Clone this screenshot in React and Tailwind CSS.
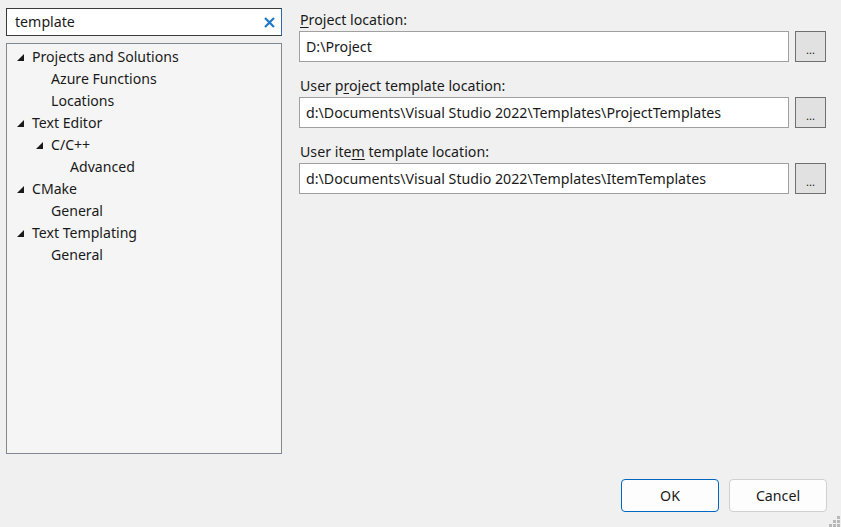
import { useState } from 'react';

const FONT = { fontFamily: '"Noto Sans", "Open Sans", sans-serif' };

const TREE = [
  { label: 'Projects and Solutions', depth: 0, open: true },
  { label: 'Azure Functions', depth: 1 },
  { label: 'Locations', depth: 1 },
  { label: 'Text Editor', depth: 0, open: true },
  { label: 'C/C++', depth: 1, open: true },
  { label: 'Advanced', depth: 2 },
  { label: 'CMake', depth: 0, open: true },
  { label: 'General', depth: 1 },
  { label: 'Text Templating', depth: 0, open: true },
  { label: 'General', depth: 1 },
];

const INDENT = ['pl-[25px]', 'pl-[44px]', 'pl-[63px]'];
const CARET = ['left-[10px]', 'left-[29px]', 'left-[48px]'];

function Caret() {
  return (
    <svg width="7" height="7" viewBox="0 0 7 7" className="block">
      <polygon points="7,0 7,7 0,7" fill="#1a1a1a" />
    </svg>
  );
}

function TreeRow({ item }) {
  return (
    <div className={`relative h-[22px] flex items-center ${INDENT[item.depth]}`}>
      {item.open && (
        <span className={`absolute top-[8px] ${CARET[item.depth]}`}>
          <Caret />
        </span>
      )}
      <span className="text-[14.1px] text-[#1a1a1a] leading-none">{item.label}</span>
    </div>
  );
}

function PathField({ label, value }) {
  return (
    <div className="flex flex-col">
      <div className="h-[23px] pt-[2px] flex items-center text-[14.2px] text-[#1a1a1a] pl-[1px]">
        <span>{label}</span>
      </div>
      <div className="flex gap-[6px] mt-[1px]">
        <div className="h-[31px] flex-1 bg-white border border-[#a0a0a0] flex items-center px-[6px] text-[14.2px] text-[#1a1a1a] whitespace-nowrap overflow-hidden">
          {value}
        </div>
        <button className="w-[31px] h-[31px] bg-[#e1e1e1] border border-[#707070] flex items-end justify-center pb-[6px] text-[11px] text-[#1a1a1a] leading-none">
          ...
        </button>
      </div>
    </div>
  );
}

function Grip() {
  const dots = [
    [8, 0], [8, 4], [4, 4], [8, 8], [4, 8], [0, 8],
  ];
  return (
    <svg width="11" height="11" viewBox="0 0 11 11" className="absolute right-[1px] bottom-0">
      {dots.map(([x, y], i) => (
        <rect key={i} x={x} y={y} width="3" height="3" fill="#b9b9b9" />
      ))}
    </svg>
  );
}

export default function App() {
  const [query, setQuery] = useState('template');

  return (
    <div className="relative w-[841px] h-[527px] bg-[#f0f0f0] overflow-hidden" style={FONT}>
      <div className="flex h-full">
        {/* Left: search + tree */}
        <div className="w-[276px] ml-[6px] mt-[8px] flex flex-col">
          <div className="h-[28px] bg-white border border-[#3a3a3a] border-r-[#2b6cb0] flex items-center pl-[8px] pr-[6px]">
            <input
              value={query}
              onChange={(e) => setQuery(e.target.value)}
              className="flex-1 min-w-0 outline-none bg-transparent text-[14.2px] text-[#1a1a1a] caret-black"
            />
            <svg width="11" height="11" viewBox="0 0 11 11" className="shrink-0">
              <path d="M1 1 L10 10 M10 1 L1 10" stroke="#1f78c8" strokeWidth="2.2" />
            </svg>
          </div>
          <div className="mt-[7px] h-[411px] bg-[#f5f5f5] border border-[#818891] pt-[2px]">
            {TREE.map((item, i) => (
              <TreeRow key={i} item={item} />
            ))}
          </div>
        </div>

        {/* Right: locations */}
        <div className="flex-1 ml-[17px] mr-[15px] mt-[7px] flex flex-col gap-[11px]">
          <PathField
            label={<><span className="underline underline-offset-2">P</span>roject location:</>}
            value="D:\Project"
          />
          <PathField
            label={<>User p<span className="underline underline-offset-2">r</span>oject template location:</>}
            value="d:\Documents\Visual Studio 2022\Templates\ProjectTemplates"
          />
          <PathField
            label={<>User ite<span className="underline underline-offset-2">m</span> template location:</>}
            value="d:\Documents\Visual Studio 2022\Templates\ItemTemplates"
          />
        </div>
      </div>

      {/* Footer buttons */}
      <div className="absolute right-[14px] bottom-[15px] flex gap-[10px]">
        <button className="w-[98px] h-[33px] rounded-[4px] bg-[#fdfdfd] border border-[#0067c0] text-[14.2px] text-[#1a1a1a]">
          OK
        </button>
        <button className="w-[98px] h-[33px] rounded-[4px] bg-[#fdfdfd] border border-[#d0d0d0] text-[14.2px] text-[#1a1a1a]">
          Cancel
        </button>
      </div>
      <Grip />
    </div>
  );
}
